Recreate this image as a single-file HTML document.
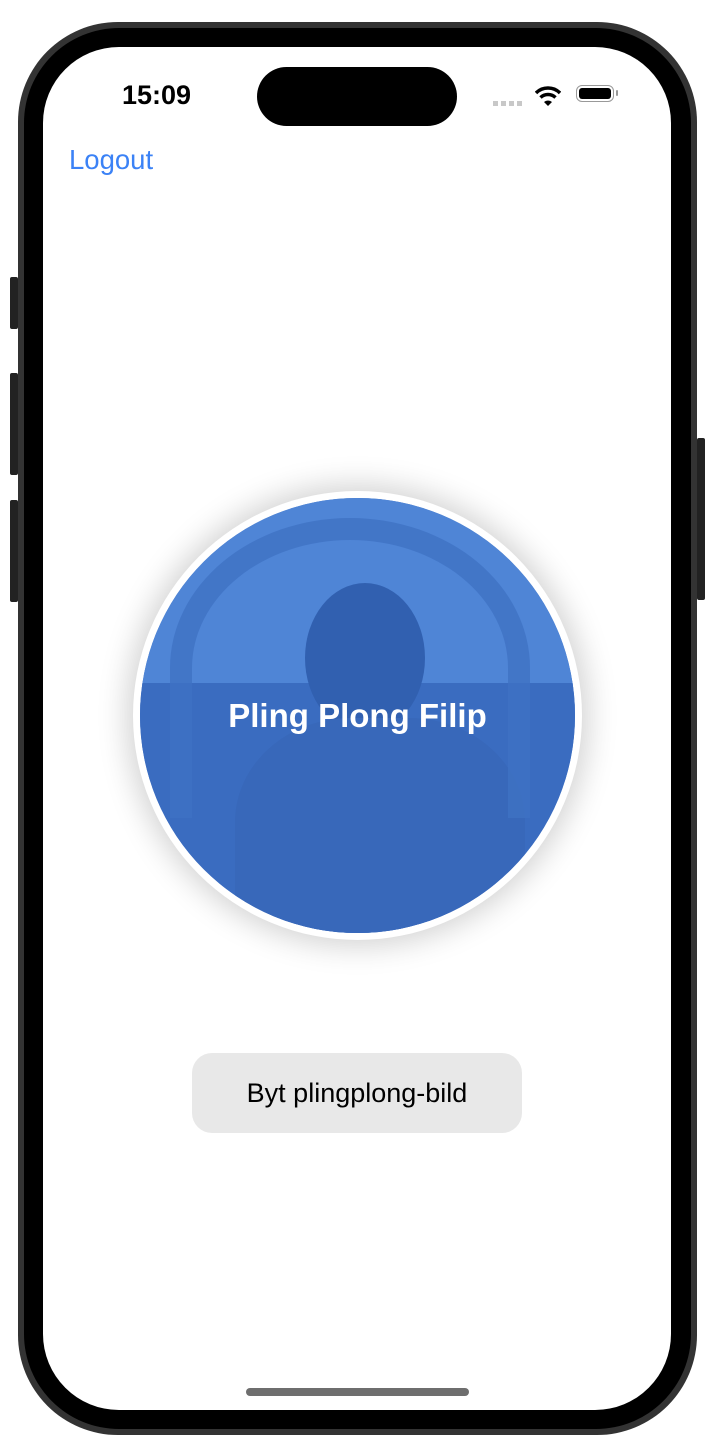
<!DOCTYPE html>
<html><head><meta charset="utf-8"><style>
html,body{margin:0;padding:0;background:#fff;width:714px;height:1439px;overflow:hidden;font-family:"Liberation Sans",sans-serif}
.frame{position:absolute;left:18px;top:22px;width:679px;height:1413px;border-radius:100px;background:#333;}
.frame2{position:absolute;left:24px;top:28px;width:667px;height:1401px;border-radius:95px;background:#000;}
.screen{position:absolute;left:43px;top:47px;width:628px;height:1363px;border-radius:76px;background:#fff;overflow:hidden}
.btn{position:absolute;background:#222;width:8px;border-radius:2px}
</style></head><body>
<div class="btn" style="left:10px;top:277px;height:52px"></div>
<div class="btn" style="left:10px;top:373px;height:102px"></div>
<div class="btn" style="left:10px;top:500px;height:102px"></div>
<div class="btn" style="left:697px;top:438px;height:162px"></div>
<div class="frame"></div><div class="frame2"></div>
<div class="screen">
  <div style="position:absolute;left:79px;top:33px;font-size:27px;font-weight:bold;color:#000">15:09</div>
  <div style="position:absolute;left:214px;top:20px;width:200px;height:59px;border-radius:30px;background:#000"></div>
  <div style="position:absolute;left:450px;top:54px;width:30px;height:5px;background:repeating-linear-gradient(90deg,#c8c8c8 0 5px,transparent 5px 8px)"></div>
  <svg style="position:absolute;left:492px;top:38px" width="26" height="22" viewBox="0 0 26 22"><path d="M1 8 A17 17 0 0 1 25 8" stroke="#000" stroke-width="3.5" fill="none"/><path d="M5.5 12.5 A11 11 0 0 1 20.5 12.5" stroke="#000" stroke-width="3.5" fill="none"/><path d="M9 17 L13 21 L17 17 A6 6 0 0 0 9 17Z" fill="#000"/></svg>
  <div style="position:absolute;left:533px;top:38px;width:38px;height:17px;border:1.5px solid #999;border-radius:6px;box-sizing:border-box;padding:2px"><div style="width:100%;height:100%;background:#000;border-radius:3px"></div></div>
  <div style="position:absolute;left:573px;top:43px;width:2px;height:6px;background:#999;border-radius:1px"></div>
  <div style="position:absolute;left:26px;top:97px;font-size:27.5px;color:#3b82f6">Logout</div>
  <div style="position:absolute;left:90px;top:444px;width:449px;height:449px;border-radius:50%;background:#fff;box-shadow:0 0 30px 6px rgba(0,0,0,0.18)"></div>
  <div style="position:absolute;left:97px;top:451px;width:435px;height:435px;border-radius:50%;overflow:hidden;background:#3d72c8">
    <div style="position:absolute;left:0;top:0;width:100%;height:190px;background:#4f85d6"></div>
    <div style="position:absolute;left:0;top:185px;width:100%;height:250px;background:#3a6cc0"></div>
    <div style="position:absolute;left:165px;top:85px;width:120px;height:150px;border-radius:50%;background:#3160b0"></div>
    <div style="position:absolute;left:95px;top:220px;width:290px;height:260px;border-radius:40% 40% 0 0;background:#3868ba"></div>
    <div style="position:absolute;left:30px;top:20px;width:360px;height:300px;border-radius:50% 50% 0 0;border:22px solid #3f72c4;border-bottom:none;box-sizing:border-box;opacity:.8"></div>
  </div>
  <div style="position:absolute;left:90px;top:650px;width:449px;text-align:center;font-size:33px;font-weight:bold;color:#fff">Pling Plong Filip</div>
  <div style="position:absolute;left:149px;top:1006px;width:330px;height:80px;border-radius:20px;background:#e8e8e8;text-align:center;line-height:80px;font-size:27px;color:#000">Byt plingplong-bild</div>
  <div style="position:absolute;left:203px;top:1341px;width:223px;height:8px;border-radius:4px;background:#6e6e6e"></div>
</div>
</body></html>
